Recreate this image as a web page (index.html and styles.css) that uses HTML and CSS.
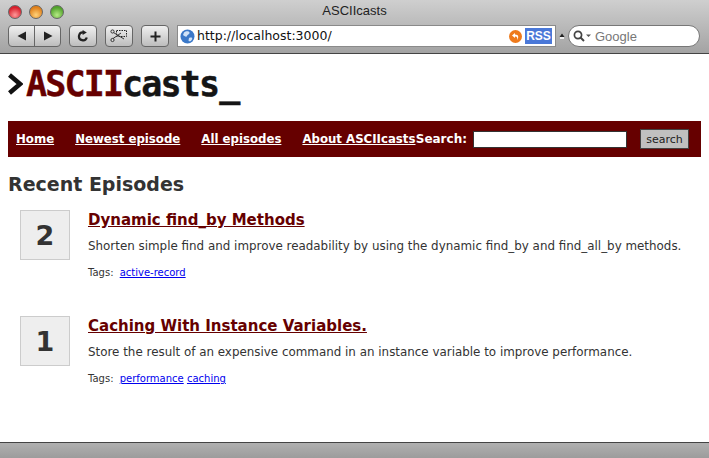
FILE: index.html
```html
<!DOCTYPE html>
<html lang="en">
<head>
<meta charset="utf-8">
<title>ASCIIcasts</title>
<link rel="stylesheet" href="styles.css">
</head>
<body>
<div class="window">
  <header class="chrome">
    <div class="titlebar">
      <div class="lights">
        <span class="light red"></span><span class="light amber"></span><span class="light green"></span>
      </div>
      <div class="wintitle">ASCIIcasts</div>
    </div>
    <div class="toolbar">
      <div class="tbtn group">
        <span class="seg"><svg width="10" height="10" viewBox="0 0 10 10"><path d="M9 0.5V9.5L0.5 5Z" fill="#222"/></svg></span>
        <span class="seg sep"><svg width="10" height="10" viewBox="0 0 10 10"><path d="M1 0.5V9.5L9.5 5Z" fill="#222"/></svg></span>
      </div>
      <div class="tbtn"><svg width="12" height="12" viewBox="0 0 12 12"><path d="M9.8 7.5A4 4 0 1 1 6.3 2.3" fill="none" stroke="#222" stroke-width="2.2"/><path d="M5.6 0L9.8 2.4L5.6 5Z" fill="#222"/></svg></div>
      <div class="tbtn"><svg width="18" height="14" viewBox="0 0 18 14"><rect x="6.5" y="1.5" width="10" height="6" fill="none" stroke="#222" stroke-dasharray="1.5 1"/><path d="M1 2L14 10M1 11L11 4" stroke="#333" stroke-width="1" fill="none"/><circle cx="2.5" cy="2.5" r="1.6" fill="#ddd" stroke="#333"/><circle cx="2.5" cy="11" r="1.6" fill="#ddd" stroke="#333"/></svg></div>
      <div class="tbtn"><svg width="11" height="11" viewBox="0 0 11 11"><path d="M5.5 0.5V10.5M0.5 5.5H10.5" stroke="#222" stroke-width="2"/></svg></div>
      <div class="address">
        <svg class="globe" width="15" height="15" viewBox="0 0 15 15"><circle cx="7.5" cy="7.5" r="7" fill="#3a78c8"/><path d="M4 3.5C6 1.5 9 2 9.5 3.5C10 5 7.5 5.5 7 7C6.5 8.5 4 7 3 6ZM9 9C11 8 13 8.5 12 10.5C11 12.5 9 13 8.5 11.5Z" fill="#cfe2f7"/></svg>
        <span class="url">http://localhost:3000/</span>
        <svg class="back" width="13" height="13" viewBox="0 0 13 13"><circle cx="6.5" cy="6.5" r="6.5" fill="#ee7a1c"/><path d="M6 3L3 5.5L6 8V6.5C8 6.3 8.7 7.5 8 10C10 7.5 9.8 4.6 6 4.5Z" fill="#fff"/></svg>
        <span class="rss">RSS</span>
      </div>
      <svg class="snap" width="6" height="6" viewBox="0 0 6 6"><path d="M3 0.5L5.5 4H0.5Z" fill="#222"/><rect x="1" y="4" width="4" height="2" fill="#eee"/></svg>
      <div class="searchbox">
        <svg width="18" height="12" viewBox="0 0 18 12"><circle cx="5" cy="5" r="3.6" fill="none" stroke="#444" stroke-width="1.7"/><path d="M7.5 7.5L11 11" stroke="#444" stroke-width="2"/><path d="M13 4.5H18L15.5 7Z" fill="#555"/></svg>
        <span class="gtext">Google</span>
      </div>
    </div>
  </header>

  <main class="page">
    <div class="logo">
      <svg class="prompt" width="15" height="24" viewBox="0 0 15 24"><path d="M1.5 3L12 12L1.5 21" fill="none" stroke="#111" stroke-width="4.5"/></svg>
      <span class="logotext"><span class="ascii">ASCII</span>casts<span class="cursor">_</span></span>
    </div>
    <nav class="nav">
      <div class="navlinks">
        <a href="#">Home</a>
        <a href="#">Newest episode</a>
        <a href="#">All episodes</a>
        <a href="#">About ASCIIcasts</a>
      </div>
      <form class="navsearch">
        <label class="navlabel" for="q">Search:</label>
        <input class="navinput" id="q" type="text">
        <button class="navbtn" type="button">search</button>
      </form>
    </nav>
    <h2 class="heading">Recent Episodes</h2>
    <article class="episode">
      <div class="num">2</div>
      <div class="body">
        <h3 class="title"><a href="#">Dynamic find_by Methods</a></h3>
        <p class="desc">Shorten simple find and improve readability by using the dynamic find_by and find_all_by methods.</p>
        <p class="tags">Tags: <a href="#">active-record</a></p>
      </div>
    </article>
    <article class="episode">
      <div class="num">1</div>
      <div class="body">
        <h3 class="title"><a href="#">Caching With Instance Variables.</a></h3>
        <p class="desc">Store the result of an expensive command in an instance variable to improve performance.</p>
        <p class="tags">Tags: <a href="#">performance</a> <a href="#">caching</a></p>
      </div>
    </article>
  </main>
  <footer class="statusbar"></footer>
</div>
</body>
</html>
```

FILE: styles.css
```css
* { box-sizing: border-box; }
html, body { margin: 0; height: 100%; overflow: hidden; }
body { font-family: "DejaVu Sans", Verdana, sans-serif; background: #fff; color: #333; }
.window { height: 458px; display: flex; flex-direction: column; }

.chrome { height: 54px; flex: none; background: linear-gradient(#cfcfcf, #a3a3a3); border-bottom: 1px solid #444; }
.titlebar { height: 22px; display: flex; align-items: center; position: relative; padding-left: 8px; }
.lights { display: flex; gap: 7px; }
.light { width: 14px; height: 14px; border-radius: 50%; border: 1px solid #666; margin-top: 1px; }
.red { background: radial-gradient(circle at 50% 75%, #ff9a9a, #d81f2b 70%); }
.amber { background: radial-gradient(circle at 50% 75%, #ffd27a, #e0801a 70%); }
.green { background: radial-gradient(circle at 50% 75%, #b6ea85, #52a32c 70%); }
.wintitle { position: absolute; left: 0; right: 0; top: 3px; text-align: center; font: 13px "Liberation Sans", sans-serif; color: #222; line-height: 16px; }

.toolbar { display: flex; align-items: center; height: 24px; padding-left: 8px; margin-top: 2px; }
.tbtn { height: 22px; width: 28px; margin-right: 8px; display: flex; align-items: center; justify-content: center; border: 1px solid #666; border-radius: 4px; background: linear-gradient(#f0f0f0, #bdbdbd); }
.group { width: 53px; padding: 0; }
.seg { flex: 1; height: 100%; display: flex; align-items: center; justify-content: center; }
.sep { border-left: 1px solid #666; }
.address { width: 379px; height: 22px; display: flex; align-items: center; background: #fff; border: 1px solid #8a8a8a; padding: 0 3px 0 2px; }
.globe { flex: none; }
.url { font: 12.5px/20px "DejaVu Sans", sans-serif; color: #111; margin-left: 2px; flex: 1; }
.back { flex: none; margin-right: 3px; }
.rss { flex: none; width: 27px; height: 16px; background: #4a78d8; color: #fff; font: bold 12px/16px "Liberation Sans", sans-serif; text-align: center; }
.snap { flex: none; margin: 0 3px 0 3px; }
.searchbox { width: 132px; height: 22px; border: 1px solid #777; border-radius: 11px; background: #fff; display: flex; align-items: center; padding-left: 4px; gap: 4px; }
.gtext { font: 13px "Liberation Sans", sans-serif; color: #777; }

.page { flex: 1; padding: 0 8px; min-height: 0; background: #fff; }
.logo { height: 67px; display: flex; align-items: flex-start; padding-top: 17px; }
.prompt { flex: none; margin-top: 1px; }
.logotext { font: bold 35px/27px "DejaVu Sans Mono", monospace; letter-spacing: -1.85px; color: #151515; margin-left: 3px; -webkit-text-stroke: .4px currentColor; }
.ascii { color: #660000; }
.cursor { position: relative; top: 1px; left: 1px; }

.nav { height: 36px; background: #660000; display: flex; align-items: center; justify-content: space-between; padding: 0 12px 0 8px; font-size: 12px; font-weight: bold; color: #fff; white-space: nowrap; }
.navlinks { display: flex; gap: 21px; font-size: 11.75px; }
.navlinks a { color: #fff; }
.navsearch { display: flex; align-items: center; margin: 0; }
.navlabel { margin-right: 6px; }
.navinput { width: 154px; height: 17px; border: 1px solid #333; background: #fff; padding: 0; margin-right: 13px; }
.navbtn { width: 49px; height: 20px; padding: 0; background: #c0c0c0; border: 1px solid #444; font: 11px "DejaVu Sans", sans-serif; color: #222; }

.heading { margin: 16px 0 15px; font-size: 19px; line-height: 22px; color: #333; font-weight: bold; }
.episode { display: flex; height: 106px; padding-left: 12px; }
.num { width: 50px; height: 50px; flex: none; background: #eee; border: 1px solid #ccc; font-size: 27px; font-weight: bold; color: #333; display: flex; align-items: center; justify-content: center; }
.body { margin-left: 18px; }
.title { margin: 0; font-size: 15px; line-height: 20px; font-weight: bold; }
.title a { color: #660000; }
.desc { margin: 7px 0 0; font-size: 11.9px; line-height: 18px; color: #333; }
.tags { margin: 11px 0 0; font-size: 10px; line-height: 14px; color: #333; }
.tags a { color: #0000ee; margin-left: 3px; }
.tags a + a { margin-left: 0; }

.statusbar { height: 16px; flex: none; background: linear-gradient(#b0b0b0, #9c9c9c); border-top: 1px solid #444; }
```
